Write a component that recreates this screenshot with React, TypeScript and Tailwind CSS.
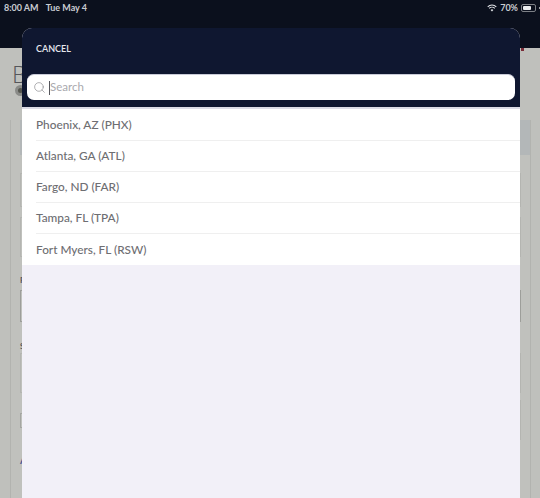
import { Search } from "lucide-react";

const AIRPORTS = ["Phoenix, AZ (PHX)", "Atlanta, GA (ATL)", "Fargo, ND (FAR)", "Tampa, FL (TPA)", "Fort Myers, FL (RSW)"];

function StatusBar() {
  return (
    <div className="h-[14px] flex items-center justify-between pl-1 text-[9px] font-bold text-[#c9ccd2]">
      <div className="flex gap-[7px]">
        <span>8:00 AM</span>
        <span>Tue May 4</span>
      </div>
      <div className="flex items-center gap-[3px]">
        <svg width="10" height="8" viewBox="0 0 10 8" fill="none" stroke="#e4e6ea" strokeWidth="1.1">
          <path d="M.7 2.8a6.2 6.2 0 0 1 8.6 0" />
          <path d="M2.2 4.4a4 4 0 0 1 5.6 0" />
          <path d="M5 7.6 3.6 6a2 2 0 0 1 2.8 0Z" fill="#e4e6ea" stroke="none" />
        </svg>
        <span>70%</span>
        <div className="w-[15px] h-[8px] rounded-[2px] border border-[#7d8086] p-px">
          <div className="h-full w-[75%] bg-[#eceef0] rounded-[1px]" />
        </div>
        <div className="w-px h-[2px] bg-[#9a9da3]" />
      </div>
    </div>
  );
}

function PageBehind() {
  return (
    <div className="h-[498px] overflow-hidden bg-[#bfc0bc]">
      <div className="h-[48px] bg-[#0b101d] pt-px">
        <StatusBar />
      </div>
      <div className="pl-3 pt-[14px]">
        <div className="text-[23px] leading-[24px] font-light text-[#55565a]">B</div>
        <div className="ml-[3px] mt-[-1px] w-[11px] h-[11px] rounded-full bg-[#55564f] border-[3px] border-[#8a8b88]" />
      </div>
      <div className="ml-[10px] mr-[9px] mt-[24px] h-[380px] bg-[#c0c1bd] border-x border-[#b2b3af]">
        <div className="ml-[9px] h-[35px] bg-[#b3b7b8]" />
        <div className="px-[9px] pt-[18px] flex flex-col">
          <div className="h-[34px] border border-[#b4b5b1]" />
          <div className="mt-[10px] h-[40px] border border-[#b4b5b1]" />
          <div className="h-[33px] pt-[18px] text-[8px] leading-[10px] font-bold text-[#55565a]">R</div>
          <div className="h-[32px] border border-[#9d9e9a]" />
          <div className="h-[31px] pt-[19px] text-[8px] leading-[10px] font-bold text-[#55565a]">S</div>
          <div className="h-[40px] border border-[#b4b5b1]" />
          <div className="mt-[7px] h-[40px] flex items-center justify-between">
            <div className="w-[6px] h-[15px] border border-[#a5a6a2]" />
            <div className="w-[6px] h-[40px] border border-[#b4b5b1]" />
          </div>
          <div className="mt-[14px] text-[11px] leading-[12px] font-semibold text-[#4a5590]">A</div>
        </div>
      </div>
    </div>
  );
}

export default function App() {
  return (
    <div className="relative w-[540px] h-[498px] overflow-hidden" style={{ fontFamily: "Lato, 'Open Sans', sans-serif" }}>
      <PageBehind />
      <div className="absolute left-[521px] top-[48px] w-[3px] h-[3px] bg-[#7a2a36]" />
      <div className="absolute left-[22px] top-[28px] w-[498px] h-[470px] rounded-t-[10px] overflow-hidden bg-[#f2f0f8] flex flex-col">
        <div className="h-[79px] shrink-0 bg-[#0f1730] pt-[16px]">
          <div className="pl-[14px] text-[9px] leading-[10px] font-semibold text-[#e6e8ee]">CANCEL</div>
          <div className="mx-[5px] mt-[20px] h-[26px] rounded-[7px] bg-white border-t border-[#c9cbd8] flex items-center pl-[6px]">
            <Search className="w-[13px] h-[13px] text-[#8d8d92]" strokeWidth={1.25} />
            <span className="ml-[3px] w-px h-[14px] bg-[#55565c]" />
            <span className="text-[11.5px] text-[#a9a9ae] -translate-y-px">Search</span>
          </div>
        </div>
        <div className="h-[2px] bg-[#dcdce6]" />
        <div className="bg-white pt-[1px]">
          {AIRPORTS.map((a, i) => (
            <div key={a} className="pl-[14px]">
              <div className={`h-[31px] flex items-center text-[11.8px] font-medium text-[#6e6e72] ${i < 4 ? "border-b border-[#efefef]" : ""}`}>
                {a}
              </div>
            </div>
          ))}
        </div>
      </div>
    </div>
  );
}
